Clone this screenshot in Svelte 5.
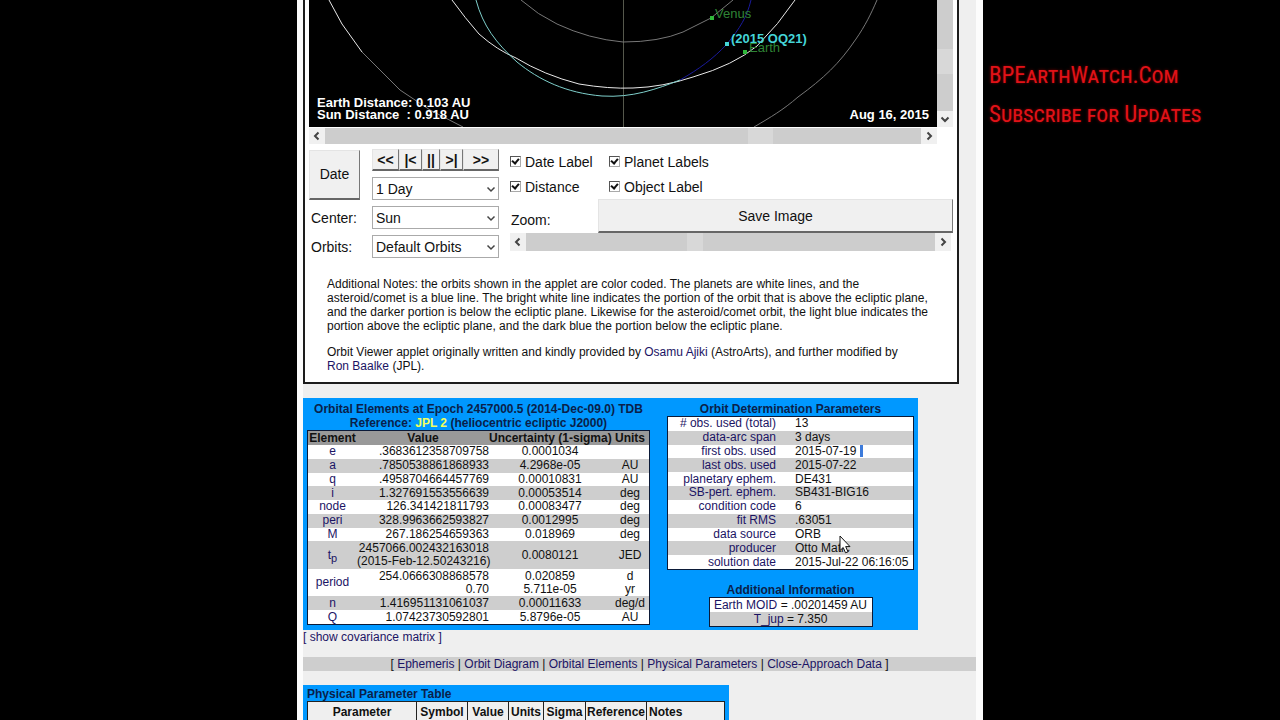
<script lang="ts">
  type Element = {
    name: string;
    sub?: string;
    value: string[];
    sigma: string[];
    units: string[];
  };

  const elements: Element[] = [
    { name: 'e', value: ['.3683612358709758'], sigma: ['0.0001034'], units: [''] },
    { name: 'a', value: ['.7850538861868933'], sigma: ['4.2968e-05'], units: ['AU'] },
    { name: 'q', value: ['.4958704664457769'], sigma: ['0.00010831'], units: ['AU'] },
    { name: 'i', value: ['1.327691553556639'], sigma: ['0.00053514'], units: ['deg'] },
    { name: 'node', value: ['126.341421811793'], sigma: ['0.00083477'], units: ['deg'] },
    { name: 'peri', value: ['328.9963662593827'], sigma: ['0.0012995'], units: ['deg'] },
    { name: 'M', value: ['267.186254659363'], sigma: ['0.018969'], units: ['deg'] },
    { name: 't', sub: 'p', value: ['2457066.002432163018', '(2015-Feb-12.50243216)'], sigma: ['0.0080121'], units: ['JED'] },
    { name: 'period', value: ['254.0666308868578', '0.70'], sigma: ['0.020859', '5.711e-05'], units: ['d', 'yr'] },
    { name: 'n', value: ['1.416951131061037'], sigma: ['0.00011633'], units: ['deg/d'] },
    { name: 'Q', value: ['1.07423730592801'], sigma: ['5.8796e-05'], units: ['AU'] },
  ];

  const params = [
    ['# obs. used (total)', '13'],
    ['data-arc span', '3 days'],
    ['first obs. used', '2015-07-19'],
    ['last obs. used', '2015-07-22'],
    ['planetary ephem.', 'DE431'],
    ['SB-pert. ephem.', 'SB431-BIG16'],
    ['condition code', '6'],
    ['fit RMS', '.63051'],
    ['data source', 'ORB'],
    ['producer', 'Otto Matic'],
    ['solution date', '2015-Jul-22 06:16:05'],
  ];

  const links = ['Ephemeris', 'Orbit Diagram', 'Orbital Elements', 'Physical Parameters', 'Close-Approach Data'];

  let step = $state('1 Day');
  let center = $state('Sun');
  let orbits = $state('Default Orbits');
  let dateLabel = $state(true);
  let planetLabels = $state(true);
  let distance = $state(true);
  let objectLabel = $state(true);
  let panX = $state(740);
  let panY = $state(565);
  let zoom = $state(410);
</script>

{#snippet arrow(d: string)}
  <svg viewBox="0 0 16 16" width="16" height="16" aria-hidden="true"><path {d} /></svg>
{/snippet}

<div class="screen">
  <main class="page">
    <section class="applet">
      <div class="viewer">
        <svg class="orbit" viewBox="0 0 628 127" role="img" aria-label="Orbit diagram">
          <path class="axis" d="M314.5 0V127" />
          <path class="bright" d="M20 0 L33 24 L53 52" />
          <path class="dim" d="M53 52 L91 90 L121 110 L154 127" />
          <path class="dim" d="M568 0 C562 14 556 26 547 39 C530 64 515 78 489 97 C474 110 462 117 445 127" />
          <path class="bright" d="M143 0 Q156 18 170 34 Q188 50 207 58 Q235 75 270 84 Q300 89 324 88 Q354 87 384 77 Q425 65 448 46 Q470 24 486 0" />
          <path class="dim" d="M212 0 Q229 15 248 24 Q280 39 314 42 Q350 42 374 32 L402 18 L424 0" />
          <path class="light" d="M167 0 C174 26 187 43 208 62 C230 80 257 93 293 96 C323 98 348 89 371 80" />
          <path class="dark" d="M371 80 C390 69 404 59 418 44 C431 28 438 17 442 0" />
          <rect class="planet" x="401" y="16" width="4" height="4" />
          <rect class="planet" x="434" y="50" width="4" height="4" />
          <rect class="object" x="416" y="42" width="4" height="4" />
          <text class="planet" x="406" y="18">Venus</text>
          <text class="planet" x="440" y="52">Earth</text>
          <text class="object" x="422" y="43">(2015 OQ21)</text>
          <text class="info" x="8" y="107">Earth Distance: 0.103 AU</text>
          <text class="info" x="8" y="119" xml:space="preserve">Sun Distance&nbsp; : 0.918 AU</text>
          <text class="info" x="620" y="119" text-anchor="end">Aug 16, 2015</text>
        </svg>
        <div class="scroll vertical">
          <input type="range" max="1000" bind:value={panY} aria-label="Tilt" />
          <button type="button" aria-label="Down">{@render arrow('M4.5 6.5 8 10l3.5-3.5')}</button>
        </div>
        <div class="scroll">
          <button type="button" aria-label="Left">{@render arrow('M9.5 4.5 6 8l3.5 3.5')}</button>
          <input type="range" max="1000" bind:value={panX} aria-label="Rotate" />
          <button type="button" aria-label="Right">{@render arrow('M6.5 4.5 10 8l-3.5 3.5')}</button>
        </div>
      </div>

      <div class="controls">
        <div class="settings">
          <button type="button" class="date">Date</button>
          <div class="player">
            <button type="button">&lt;&lt;</button>
            <button type="button">|&lt;</button>
            <button type="button">||</button>
            <button type="button">&gt;|</button>
            <button type="button">&gt;&gt;</button>
          </div>
          <div class="select">
            <select bind:value={step} aria-label="Step">
              <option>1 Day</option>
            </select>
            {@render arrow('M4.5 6.5 8 10l3.5-3.5')}
          </div>
          <label for="center">Center:</label>
          <div class="select">
            <select id="center" bind:value={center}>
              <option>Sun</option>
            </select>
            {@render arrow('M4.5 6.5 8 10l3.5-3.5')}
          </div>
          <label for="orbits">Orbits:</label>
          <div class="select">
            <select id="orbits" bind:value={orbits}>
              <option>Default Orbits</option>
            </select>
            {@render arrow('M4.5 6.5 8 10l3.5-3.5')}
          </div>
        </div>

        <div class="display">
          <div class="checks">
            <label><input type="checkbox" bind:checked={dateLabel} />Date Label</label>
            <label><input type="checkbox" bind:checked={planetLabels} />Planet Labels</label>
            <label><input type="checkbox" bind:checked={distance} />Distance</label>
            <label><input type="checkbox" bind:checked={objectLabel} />Object Label</label>
          </div>
          <div class="zoom">
            <label for="zoom">Zoom:</label>
            <button type="button">Save Image</button>
          </div>
          <div class="scroll small">
            <button type="button" aria-label="Zoom out">{@render arrow('M9.5 4.5 6 8l3.5 3.5')}</button>
            <input id="zoom" type="range" max="1000" bind:value={zoom} />
            <button type="button" aria-label="Zoom in">{@render arrow('M6.5 4.5 10 8l-3.5 3.5')}</button>
          </div>
        </div>
      </div>

      <div class="notes">
        <p>
          Additional Notes: the orbits shown in the applet are color coded. The planets are white lines, and the<br />
          asteroid/comet is a blue line. The bright white line indicates the portion of the orbit that is above the ecliptic plane,<br />
          and the darker portion is below the ecliptic plane. Likewise for the asteroid/comet orbit, the light blue indicates the<br />
          portion above the ecliptic plane, and the dark blue the portion below the ecliptic plane.
        </p>
        <p>
          Orbit Viewer applet originally written and kindly provided by <a href="#ajiki">Osamu Ajiki</a> (AstroArts), and further modified by<br />
          <a href="#baalke">Ron Baalke</a> (JPL).
        </p>
      </div>
    </section>

    <section class="panel">
      <div>
        <h2>
          Orbital Elements at Epoch 2457000.5 (2014-Dec-09.0) TDB<br />
          Reference: <a href="#ref">JPL 2</a> (heliocentric ecliptic J2000)
        </h2>
        <table class="data elements">
          <thead>
            <tr><th>Element</th><th>Value</th><th>Uncertainty (1-sigma)</th><th>Units</th></tr>
          </thead>
          <tbody>
            {#each elements as el}
              <tr>
                <td><a href="#{el.name}">{el.name}{#if el.sub}<sub>{el.sub}</sub>{/if}</a></td>
                {#each [el.value, el.sigma, el.units] as lines}
                  <td>{#each lines as line}<div>{line}</div>{/each}</td>
                {/each}
              </tr>
            {/each}
          </tbody>
        </table>
      </div>

      <div class="side">
        <h2>Orbit Determination Parameters</h2>
        <table class="data params">
          <tbody>
            {#each params as [name, value]}
              <tr>
                <th><a href="#param">{name}</a></th>
                <td>
                  {value}
                  {#if name === 'first obs. used'}<span class="mark"></span>{/if}
                  {#if name === 'producer'}
                    <svg class="pointer" viewBox="0 0 12 19" width="12" height="19" aria-hidden="true">
                      <path d="M1 1v14.500l3.200-3 2.300 5.300 2.500-1-2.300-5.200H11z" />
                    </svg>
                  {/if}
                </td>
              </tr>
            {/each}
          </tbody>
        </table>
        <h2 class="more">Additional Information</h2>
        <table class="data extra">
          <tbody>
            <tr><td><a href="#moid">Earth MOID</a> = .00201459 AU</td></tr>
            <tr><td><a href="#tjup">T_jup</a> = 7.350</td></tr>
          </tbody>
        </table>
      </div>
    </section>

    <p class="covariance"><a href="#cov">[ show covariance matrix ]</a></p>

    <nav>
      [ {#each links as link, i}{#if i}{' | '}{/if}<a href="#{i}">{link}</a>{/each} ]
    </nav>

    <section class="physical">
      <h2>Physical Parameter Table</h2>
      <table>
        <colgroup>
          <col class="wide" /><col class="symbol" /><col class="value" /><col class="units" /><col class="sigma" /><col class="reference" /><col />
        </colgroup>
        <thead>
          <tr>
            <th>Parameter</th><th>Symbol</th><th>Value</th><th>Units</th><th>Sigma</th><th>Reference</th><th>Notes</th>
          </tr>
        </thead>
      </table>
    </section>
  </main>

  <aside>
    BPEarthWatch.Com<br />
    Subscribe for Updates
  </aside>
</div>

<style>
  :global(body) {
    background: #000;
  }

  .screen {
    display: grid;
    grid-template-columns: minmax(0, 1fr) 686px minmax(0, 1fr);
    height: 100vh;
    overflow: hidden;
    background: #000;
    font: 12px/14px 'Liberation Sans', Arial, sans-serif;
    color: #111;
  }

  .page {
    grid-column: 2;
    box-sizing: border-box;
    background: #efefef;
    border: solid #fcfcfc;
    border-width: 0 7px 0 6px;
  }

  a {
    color: #1b1464;
    text-decoration: none;
  }

  h2,
  p {
    margin: 0;
    font-size: 12px;
  }

  button,
  select,
  input {
    margin: 0;
    font-family: inherit;
    color: #111;
  }

  .applet {
    margin-right: 17px;
    padding: 0 4px 9px;
    background: #fff;
    border: 2px solid #1c1c1c;
    border-top: 0;
  }

  .viewer {
    display: grid;
    grid-template-columns: 1fr 16px;
    row-gap: 1px;
  }

  .orbit {
    display: block;
    width: 100%;
    background: #000;
  }

  .orbit path {
    fill: none;
    stroke-width: 1;
  }

  .orbit .axis {
    stroke: #55584c;
  }

  .orbit .bright {
    stroke: #e8e8e8;
  }

  .orbit .dim {
    stroke: #777;
  }

  .orbit .light {
    stroke: #7fd0cc;
  }

  .orbit .dark {
    stroke: #1a1a9c;
  }

  .orbit text {
    font-size: 13px;
  }

  .orbit .planet {
    fill: #2fb83a;
  }

  .orbit text.planet {
    fill: #2f8435;
  }

  .orbit .object {
    fill: #45d5d8;
  }

  .orbit text.object,
  .orbit .info {
    font-weight: bold;
  }

  .orbit .info {
    fill: #fff;
  }

  .scroll {
    display: flex;
    height: 16px;
    background: #cdcdcd;
  }

  .scroll.vertical {
    flex-direction: column;
    height: auto;
  }

  .scroll.small {
    height: 18px;
    margin-right: 2px;
  }

  .scroll button {
    display: flex;
    align-items: center;
    width: 16px;
    padding: 0;
    border: 0;
    background: #f0f0f0;
  }

  .scroll path,
  .select path {
    fill: none;
    stroke: #444;
    stroke-width: 2;
  }

  .scroll input {
    flex: 1;
    min-width: 0;
    min-height: 0;
    appearance: none;
    background: #cdcdcd;
  }

  .scroll.vertical input {
    width: 16px;
    writing-mode: vertical-lr;
  }

  .scroll input::-webkit-slider-thumb {
    appearance: none;
    width: 25px;
    height: 16px;
    background: #d8d8d8;
  }

  .scroll.small input::-webkit-slider-thumb {
    width: 16px;
    height: 18px;
  }

  .scroll.vertical input::-webkit-slider-thumb {
    width: 16px;
    height: 25px;
  }

  .controls {
    display: flex;
    gap: 11px;
    padding-top: 5px;
    font-size: 14px;
    line-height: 22px;
  }

  .settings {
    display: grid;
    grid-template-columns: 51px 127px;
    grid-template-rows: 22px 23px 23px 23px;
    gap: 6px 12px;
    align-items: center;
  }

  .settings > label {
    padding-left: 2px;
    white-space: nowrap;
  }

  .controls button:not(.scroll button) {
    background: #f0f0f0;
    border: 1px solid #e4e4e4;
    border-right-color: #777;
    border-bottom: 2px solid #666;
    font-size: 14px;
  }

  .settings .date {
    grid-row: span 2;
    height: 50px;
    padding: 0;
  }

  .player {
    display: grid;
    grid-template-columns: 27px 23px 18px 23px 36px;
    height: 22px;
  }

  .player button {
    padding: 0;
    font-weight: bold;
    line-height: 16px;
  }

  .select {
    position: relative;
  }

  .select select {
    display: block;
    width: 100%;
    height: 23px;
    padding: 0 3px;
    appearance: none;
    background: #fff;
    border: 1px solid #aaa;
    border-radius: 0;
    font-size: 14px;
  }

  .select svg {
    position: absolute;
    top: 4px;
    right: 0;
    pointer-events: none;
  }

  .select path {
    stroke-width: 1.5;
  }

  .display {
    flex: 1;
  }

  .checks {
    display: grid;
    grid-template-columns: 99px 1fr;
    grid-auto-rows: 25px;
  }

  .checks label {
    display: flex;
    align-items: center;
    gap: 4px;
    white-space: nowrap;
  }

  .checks input {
    width: 11px;
    height: 11px;
    appearance: none;
    border: 1px solid #aaa;
    border-top-color: #555;
    border-left-color: #555;
  }

  .checks input:checked::after {
    content: '';
    display: block;
    width: 3px;
    height: 5px;
    margin-left: 2px;
    border: solid #111;
    border-width: 0 2px 2px 0;
    transform: rotate(40deg);
  }

  .zoom {
    display: grid;
    grid-template-columns: 88px 1fr;
    align-items: center;
  }

  .zoom label {
    padding: 8px 0 0 1px;
  }

  .zoom button {
    height: 34px;
  }

  .notes {
    display: grid;
    gap: 12px;
    padding: 19px 0 0 18px;
    white-space: nowrap;
  }

  .panel {
    display: flex;
    justify-content: space-between;
    box-sizing: border-box;
    width: 615px;
    margin-top: 14px;
    padding: 4px 4px 3px;
    background: #0098ff;
  }

  .panel h2 {
    color: #0a1f4a;
    text-align: center;
  }

  .panel h2 a {
    color: #f4ff5c;
  }

  .data {
    border: 1px solid #0b1a38;
    border-collapse: separate;
    border-spacing: 0;
    background: #fff;
  }

  .data th,
  .data td {
    padding: 0;
    font-weight: normal;
    white-space: nowrap;
  }

  .data tbody tr:nth-child(even) {
    background: #cecece;
  }

  .elements {
    width: 343px;
    height: 195px;
    line-height: 13px;
    text-align: center;
    table-layout: fixed;
  }

  .elements thead th {
    background: #999;
    font-weight: bold;
    line-height: 14px;
  }

  .elements th:nth-child(1) {
    width: 49px;
  }

  .elements th:nth-child(2) {
    width: 132px;
  }

  .elements th:nth-child(3) {
    width: 122px;
  }

  .elements td:nth-child(2) {
    text-align: right;
  }

  .elements sub {
    font-size: 11px;
    line-height: 1px;
  }

  .side {
    display: flex;
    flex-direction: column;
    align-items: center;
  }

  .params {
    width: 247px;
    height: 154px;
    line-height: 13px;
  }

  .params th {
    width: 108px;
    text-align: right;
  }

  .params td {
    position: relative;
    padding-left: 19px;
  }

  .mark {
    display: inline-block;
    width: 3px;
    height: 12px;
    background: #3d7bdb;
    vertical-align: top;
  }

  .pointer {
    position: absolute;
    top: -6px;
    left: 63px;
  }

  .pointer path {
    fill: #fff;
    stroke: #111;
  }

  .side .more {
    padding-top: 13px;
  }

  .extra {
    width: 164px;
    text-align: center;
  }

  .covariance a {
    display: block;
  }

  nav {
    margin: 13px 0 14px;
    background: #cecece;
    text-align: center;
  }

  .physical {
    box-sizing: border-box;
    width: 426px;
    padding: 2px 4px;
    background: #0098ff;
  }

  .physical h2 {
    color: #0a1f4a;
  }

  .physical table {
    width: 100%;
    table-layout: fixed;
    border-collapse: collapse;
    background: #efefef;
  }

  .physical th {
    padding: 2px 0;
    border: 1px solid #222;
    line-height: 16px;
  }

  .physical th:last-child {
    padding-left: 2px;
    text-align: left;
  }

  .wide {
    width: 109px;
  }

  .symbol {
    width: 51px;
  }

  .value {
    width: 41px;
  }

  .units {
    width: 35px;
  }

  .sigma {
    width: 42px;
  }

  .reference {
    width: 61px;
  }

  aside {
    padding: 56px 0 0 6px;
    color: #e01218;
    font: 23px/39px 'Roboto Condensed', Roboto, sans-serif;
    font-variant: small-caps;
    text-shadow: 0 0 3px #7a0000;
    white-space: nowrap;
  }
</style>
